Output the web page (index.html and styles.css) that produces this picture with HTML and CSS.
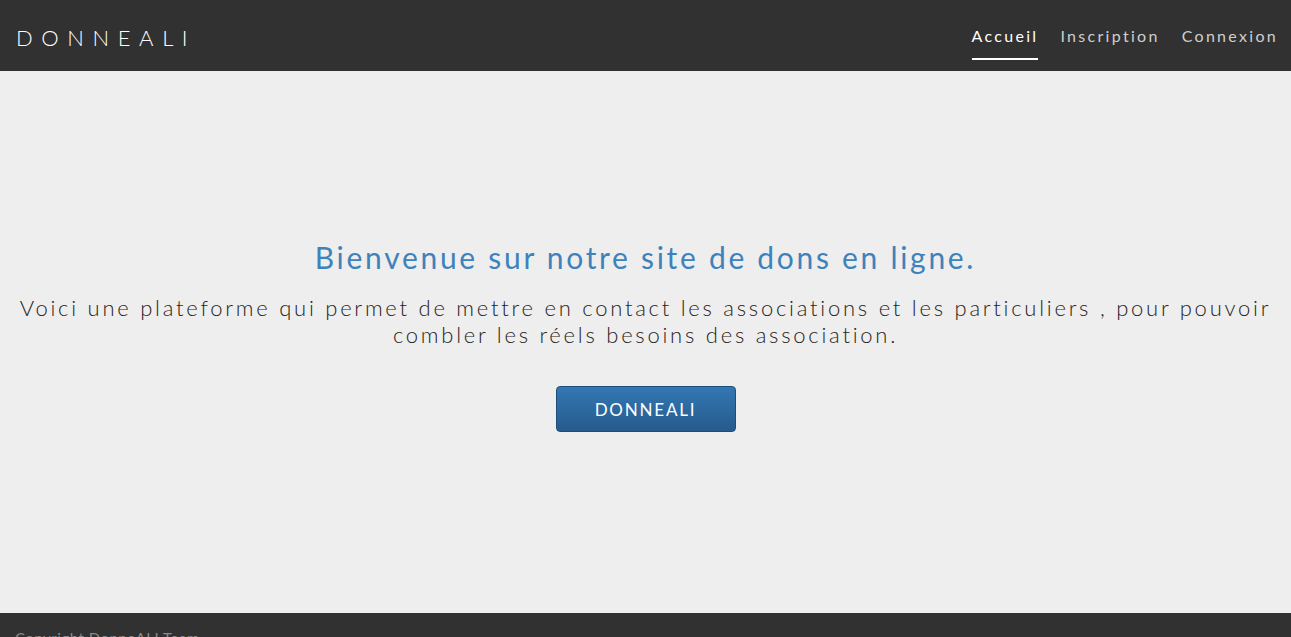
FILE: index.html
```html
<!DOCTYPE html>
<html lang="fr">
<head>
<meta charset="utf-8">
<title>DonneALI</title>
<link rel="stylesheet" href="styles.css">
</head>
<body>
<header class="topbar">
  <div class="brand">DONNEALI</div>
  <nav class="nav">
    <a class="nav-link active" href="#">Accueil</a>
    <a class="nav-link" href="#">Inscription</a>
    <a class="nav-link" href="#">Connexion</a>
  </nav>
</header>
<main class="hero">
  <h1 class="hero-title">Bienvenue sur notre site de dons en ligne.</h1>
  <p class="hero-text">Voici une plateforme qui permet de mettre en contact les associations et les particuliers , pour pouvoir combler les réels besoins des association.</p>
  <a class="btn" href="#">DONNEALI</a>
</main>
<footer class="footer">
  <p class="footer-text">Copyright DonneALI Team</p>
</footer>
</body>
</html>
```

FILE: styles.css
```css
* { box-sizing: border-box; }
html, body { margin: 0; padding: 0; height: 100%; }
body {
  font-family: "Lato", "Open Sans", sans-serif;
  background: #eeeeee;
  display: flex;
  flex-direction: column;
  overflow: hidden;
}
.topbar {
  height: 71px;
  flex: 0 0 71px;
  background: #313131;
  display: flex;
  align-items: center;
  justify-content: space-between;
  padding: 0 13px 0 16px;
}
.brand {
  color: #ffffff;
  font-size: 22px;
  font-weight: 300;
  letter-spacing: 8.6px;
  margin-top: 4px;
}
.nav {
  display: flex;
  gap: 22px;
  align-self: stretch;
}
.nav-link {
  color: #cfcfcf;
  text-decoration: none;
  font-size: 16px;
  letter-spacing: 2.3px;
  display: flex;
  align-items: center;
  padding-top: 2px;
  border-bottom: 2px solid transparent;
  margin-bottom: 11px;
  height: 49px;
  align-self: flex-end;
}
.nav-link.active {
  color: #ffffff;
  border-bottom-color: #ffffff;
}
.hero {
  flex: 0 0 542px;
  display: flex;
  flex-direction: column;
  align-items: center;
  justify-content: center;
  text-align: center;
  padding: 0 14px 13px;
}
.hero-title {
  margin: 0 0 19px;
  color: #3e82bb;
  font-size: 30px;
  font-weight: 400;
  letter-spacing: 2.7px;
  line-height: 36px;
}
.hero-text {
  margin: 0 0 38px;
  color: #2a2421;
  font-size: 22px;
  font-weight: 300;
  letter-spacing: 2.75px;
  line-height: 27px;
}
.btn {
  width: 180px;
  height: 46px;
  display: flex;
  align-items: center;
  justify-content: center;
  color: #ffffff;
  text-decoration: none;
  font-size: 17px;
  letter-spacing: 1.8px;
  border: 1px solid #1f4d78;
  border-radius: 4px;
  background: linear-gradient(#3377b3, #265b8c);
}
.footer {
  flex: 1 0 auto;
  background: #313131;
  padding: 16px 15px 0;
}
.footer-text {
  margin: 0;
  color: #8a8a8a;
  font-size: 15px;
  letter-spacing: 0.5px;
}
```
